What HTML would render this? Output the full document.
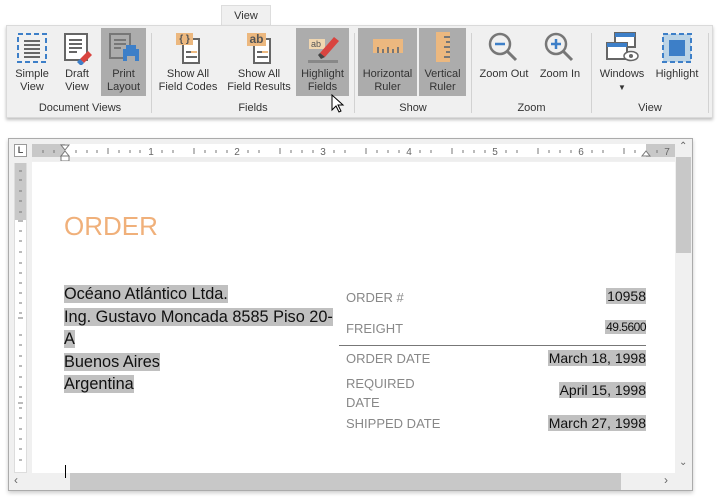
<!DOCTYPE html>
<html><head><meta charset="utf-8"><style>
*{margin:0;padding:0;box-sizing:border-box}
body{width:719px;height:501px;background:#fff;font-family:"Liberation Sans",sans-serif;position:relative;overflow:hidden;color:#333}
.abs{position:absolute}
.tab{left:221px;top:5px;width:50px;height:22px;background:#f0f0f0;border:1px solid #ddd;border-bottom:none;font-size:11px;text-align:center;line-height:20px;color:#333}
.rib{left:6px;top:25px;width:707px;height:93px;background:#f0f0f0;border:1px solid #dadada;box-shadow:0 2px 3px rgba(0,0,0,.25)}
.btn{position:absolute;top:28px;height:68px;font-size:11px;color:#333;text-align:center;line-height:13px}
.btn .lb{position:absolute;left:0;right:0;top:40px}
.btn svg{position:absolute;top:3px;left:50%;margin-left:-17px}
.hl{background:#acacac}
.sep{position:absolute;top:33px;width:1px;height:80px;background:#d2d2d2}
.gl{position:absolute;top:102px;font-size:11px;color:#333;text-align:center}
.frame{left:8px;top:138px;width:685px;height:353px;border:1px solid #ababab;background:#f0f0f0;box-shadow:0 2px 4px rgba(0,0,0,.2)}
.page{left:32px;top:162px;width:643px;height:311px;background:#fff}
.f{font-size:16.3px;color:#111;line-height:22.5px}
.f span{background:#c0c0c0}
.lab{font-size:13px;color:#888}
.val{font-size:14px;color:#111;background:#c0c0c0;right:73px;padding-left:1px}
</style></head><body>
<div class="abs tab">View</div>
<div class="abs rib"></div>

<div class="btn" style="left:14px;width:36px">
<svg width="34" height="34" viewBox="0 0 34 34"><rect x="3" y="3" width="28" height="28" fill="none" stroke="#3d7fc8" stroke-width="2" stroke-dasharray="5 3"/><g stroke="#666" stroke-width="2"><line x1="9" y1="10" x2="25" y2="10"/><line x1="9" y1="14" x2="25" y2="14"/><line x1="9" y1="18" x2="25" y2="18"/><line x1="9" y1="22" x2="25" y2="22"/><line x1="9" y1="26" x2="25" y2="26"/></g></svg>
<div class="lb">Simple<br>View</div></div>
<div class="btn" style="left:56px;width:42px">
<svg width="34" height="34" viewBox="0 0 34 34"><rect x="5" y="3" width="22" height="26" fill="#fff" stroke="#666" stroke-width="2"/><g stroke="#666" stroke-width="2"><line x1="9" y1="9" x2="22" y2="9"/><line x1="9" y1="13" x2="22" y2="13"/><line x1="9" y1="17" x2="22" y2="17"/><line x1="9" y1="21" x2="17" y2="21"/></g><path d="M20 28 L28 20 L32 24 L24 32Z" fill="#d9443f"/><path d="M17 31 L20 28 L24 32 L21 35Z" fill="#3d7fc8"/></svg>
<div class="lb">Draft<br>View</div></div>
<div class="btn hl" style="left:101px;width:45px">
<svg width="34" height="34" viewBox="0 0 34 34"><rect x="3" y="3" width="20" height="24" fill="none" stroke="#777" stroke-width="2"/><g stroke="#777" stroke-width="2"><line x1="7" y1="9" x2="19" y2="9"/><line x1="7" y1="13" x2="19" y2="13"/><line x1="7" y1="17" x2="14" y2="17"/></g><rect x="16" y="18" width="16" height="12" fill="#3d7fc8"/><rect x="19" y="14" width="10" height="6" fill="#3d7fc8"/><rect x="20" y="25" width="8" height="6" fill="#acacac"/></svg>
<div class="lb">Print<br>Layout</div></div>
<div class="sep" style="left:151px"></div>
<div class="btn" style="left:158px;width:60px">
<svg width="34" height="34" viewBox="0 0 34 34"><rect x="12" y="8" width="16" height="24" fill="#fff" stroke="#666" stroke-width="2"/><rect x="5" y="2" width="17" height="12" fill="#ecb87f"/><text x="13.5" y="11" font-size="10" text-anchor="middle" fill="#555" font-family="Liberation Sans" font-weight="bold">{ }</text><line x1="15" y1="21" x2="20" y2="21" stroke="#666" stroke-width="2"/><line x1="20" y1="21" x2="26" y2="21" stroke="#ecb87f" stroke-width="2"/><line x1="15" y1="26" x2="26" y2="26" stroke="#666" stroke-width="2"/></svg>
<div class="lb">Show All<br>Field Codes</div></div>
<div class="btn" style="left:227px;width:64px">
<svg width="34" height="34" viewBox="0 0 34 34"><rect x="12" y="8" width="16" height="24" fill="#fff" stroke="#666" stroke-width="2"/><rect x="5" y="2" width="19" height="13" fill="#ecb87f"/><text x="14.5" y="12" font-size="12" text-anchor="middle" fill="#555" font-family="Liberation Sans" font-weight="bold">ab</text><line x1="15" y1="21" x2="20" y2="21" stroke="#666" stroke-width="2"/><line x1="20" y1="21" x2="26" y2="21" stroke="#ecb87f" stroke-width="2"/><line x1="15" y1="26" x2="26" y2="26" stroke="#666" stroke-width="2"/></svg>
<div class="lb">Show All<br>Field Results</div></div>
<div class="btn hl" style="left:296px;width:53px">
<svg width="34" height="34" viewBox="0 0 34 34"><rect x="3" y="8" width="16" height="10" fill="#f0d6b0"/><text x="10" y="16" font-size="9" text-anchor="middle" fill="#555" font-family="Liberation Sans">ab</text><path d="M14 22 L28 6 L33 10 L19 26Z" fill="#d9443f"/><path d="M12 24 L14 22 L19 26 L15 28Z" fill="#444"/><rect x="2" y="29" width="30" height="3" fill="#888"/></svg>
<div class="lb">Highlight<br>Fields</div></div>
<svg class="abs" style="left:331px;top:94px" width="14" height="20" viewBox="0 0 14 20"><path d="M1 1 L1 16 L5 12 L8 18 L10 17 L7 11 L12 11Z" fill="#fff" stroke="#000" stroke-width="1"/></svg>
<div class="sep" style="left:354px"></div>
<div class="btn hl" style="left:358px;width:59px">
<svg width="34" height="34" viewBox="0 0 34 34"><rect x="2" y="8" width="30" height="14" fill="#ecb87f"/><g stroke="#777" stroke-width="2"><line x1="7" y1="22" x2="7" y2="16"/><line x1="12" y1="22" x2="12" y2="18"/><line x1="17" y1="22" x2="17" y2="16"/><line x1="22" y1="22" x2="22" y2="18"/><line x1="27" y1="22" x2="27" y2="16"/></g></svg>
<div class="lb">Horizontal<br>Ruler</div></div>
<div class="btn hl" style="left:419px;width:47px">
<svg width="34" height="34" viewBox="0 0 34 34"><rect x="10" y="1" width="14" height="30" fill="#ecb87f"/><g stroke="#777" stroke-width="2"><line x1="24" y1="6" x2="18" y2="6"/><line x1="24" y1="11" x2="20" y2="11"/><line x1="24" y1="16" x2="18" y2="16"/><line x1="24" y1="21" x2="20" y2="21"/><line x1="24" y1="26" x2="18" y2="26"/></g></svg>
<div class="lb">Vertical<br>Ruler</div></div>
<div class="sep" style="left:471px"></div>
<div class="btn" style="left:477px;width:54px">
<svg width="34" height="34" viewBox="0 0 34 34"><circle cx="13" cy="13" r="10" fill="none" stroke="#777" stroke-width="2.5"/><line x1="20" y1="20" x2="29" y2="29" stroke="#777" stroke-width="3"/><line x1="8" y1="13" x2="18" y2="13" stroke="#3d7fc8" stroke-width="2.5"/></svg>
<div class="lb">Zoom Out</div></div>
<div class="btn" style="left:536px;width:48px">
<svg width="34" height="34" viewBox="0 0 34 34"><circle cx="13" cy="13" r="10" fill="none" stroke="#777" stroke-width="2.5"/><line x1="20" y1="20" x2="29" y2="29" stroke="#777" stroke-width="3"/><line x1="8" y1="13" x2="18" y2="13" stroke="#3d7fc8" stroke-width="2.5"/><line x1="13" y1="8" x2="13" y2="18" stroke="#3d7fc8" stroke-width="2.5"/></svg>
<div class="lb">Zoom In</div></div>
<div class="sep" style="left:591px"></div>
<div class="btn" style="left:597px;width:50px">
<svg width="34" height="34" viewBox="0 0 34 34"><rect x="10" y="2" width="20" height="14" fill="#fff" stroke="#666" stroke-width="2"/><rect x="10" y="2" width="20" height="4" fill="#3d7fc8"/><rect x="2" y="12" width="20" height="16" fill="#fff" stroke="#666" stroke-width="2"/><rect x="2" y="12" width="20" height="4" fill="#3d7fc8"/><ellipse cx="26" cy="25" rx="7" ry="4.5" fill="#fff" stroke="#666" stroke-width="1.5"/><circle cx="26" cy="25" r="2" fill="#666"/></svg>
<div class="lb">Windows<br><span style="font-size:8px">▼</span></div></div>
<div class="btn" style="left:652px;width:50px">
<svg width="34" height="34" viewBox="0 0 34 34"><rect x="3" y="3" width="28" height="28" fill="#bcd4e6" stroke="#3d7fc8" stroke-width="2" stroke-dasharray="5 3"/><rect x="9" y="9" width="16" height="16" fill="#3d7fc8"/></svg>
<div class="lb">Highlight</div></div>
<div class="sep" style="left:708px"></div>

<div class="gl" style="left:14px;width:132px">Document Views</div>
<div class="gl" style="left:152px;width:202px">Fields</div>
<div class="gl" style="left:355px;width:116px">Show</div>
<div class="gl" style="left:472px;width:119px">Zoom</div>
<div class="gl" style="left:592px;width:116px">View</div>

<div class="abs frame"></div>
<div class="abs" style="left:14px;top:144px;width:13px;height:13px;border:1px solid #999;background:#fff;font-size:9px;font-weight:bold;line-height:11px;text-align:center;color:#555">L</div>
<div class="abs" style="left:32px;top:144px;width:643px;height:17px;background:#c8c8c8;border-bottom:1px solid #bbb"></div>
<div class="abs" style="left:65px;top:144px;width:581px;height:13px;background:#fff"></div>
<div class="abs" style="left:32px;top:157px;width:643px;height:4px;background:#eee"></div>
<svg class="abs" style="left:32px;top:144px" width="643" height="17">
<g stroke="#777" stroke-width="1">
<path d="M11 6v3M22 6v3M44 6v3M55 6v3M65 6v3M87 6v3M98 6v3M108 6v3M130 6v3M141 6v3M162 6v3M173 6v3M184 6v3M195 6v3M216 6v3M227 6v3M248 6v3M259 6v3M270 6v3M281 6v3M302 6v3M313 6v3M334 6v3M345 6v3M356 6v3M367 6v3M388 6v3M399 6v3M420 6v3M431 6v3M442 6v3M453 6v3M474 6v3M485 6v3M506 6v3M517 6v3M528 6v3M539 6v3M560 6v3M571 6v3M592 6v3M603 6v3M625 6v3"/>
<path d="M76 4v6M162 4v6M248 4v6M334 4v6M420 4v6M506 4v6M592 4v6"/>
</g>
<g font-size="10" fill="#666" font-family="Liberation Sans" text-anchor="middle"><text x="119" y="11">1</text><text x="205" y="11">2</text><text x="291" y="11">3</text><text x="377" y="11">4</text><text x="463" y="11">5</text><text x="549" y="11">6</text><text x="635" y="11">7</text></g>
<path d="M29 1h8l-4 5z M29 12h8l-4-5z" fill="#fff" stroke="#777"/><rect x="29" y="12" width="8" height="5" fill="#fff" stroke="#777"/>
<path d="M610 12h8l-4-5z" fill="#fff" stroke="#777"/>
</svg>
<div class="abs" style="left:14px;top:163px;width:13px;height:310px;background:#fff;border:1px solid #ddd"></div>
<div class="abs" style="left:15px;top:163px;width:11px;height:57px;background:#c8c8c8"></div>
<svg class="abs" style="left:14px;top:163px" width="13" height="310"><g stroke="#777"><path d="M5 8h3M5 17h3M5 28h3M5 38h3M5 49h3M5 68h3M5 78h3M5 89h3M5 100h3M5 110h3M5 120h3M5 130h3M5 140h3M5 150h3M5 172h3M5 182h3M5 193h3M5 203h3M5 214h3M5 224h3M5 234h3M5 245h3M5 255h3M5 266h3M5 276h3M5 286h3M5 297h3"/><path d="M4 155h5M4 240h5M4 58h5"/></g></svg>

<div class="abs page"></div>
<div class="abs" style="left:676px;top:139px;width:16px;height:334px;background:#f0f0f0"></div>
<div class="abs" style="left:676px;top:157px;width:15px;height:96px;background:#c8c8c8"></div>
<div class="abs" style="left:679px;top:141px;font-size:10px;color:#666">&#8963;</div>
<div class="abs" style="left:679px;top:457px;font-size:10px;color:#666">&#8964;</div>
<div class="abs" style="left:9px;top:473px;width:667px;height:17px;background:#f0f0f0"></div>
<div class="abs" style="left:70px;top:473px;width:551px;height:17px;background:#c8c8c8"></div>
<div class="abs" style="left:14px;top:473px;font-size:12px;color:#666">&lsaquo;</div>
<div class="abs" style="left:664px;top:473px;font-size:12px;color:#666">&rsaquo;</div>

<div class="abs" style="left:64px;top:211px;font-size:26px;color:#f0b07a">ORDER</div>
<div class="abs f" style="left:64px;top:283px;width:285px">
<span>Océano Atlántico Ltda.</span><br><span>Ing. Gustavo Moncada 8585 Piso 20-</span><br><span>A</span><br><span>Buenos Aires</span><br><span>Argentina</span></div>
<div class="abs" style="left:65px;top:465px;width:1px;height:13px;background:#000"></div>

<div class="abs lab" style="left:346px;top:290px">ORDER #</div>
<div class="abs val" style="top:288px">10958</div>
<div class="abs lab" style="left:346px;top:321px">FREIGHT</div>
<div class="abs val" style="top:320px;font-size:12px;letter-spacing:-0.5px">49.5600</div>
<div class="abs" style="left:339px;top:345px;width:307px;height:1px;background:#777"></div>
<div class="abs lab" style="left:346px;top:351px">ORDER DATE</div>
<div class="abs val" style="top:350px">March 18, 1998</div>
<div class="abs lab" style="left:346px;top:374px;line-height:19px">REQUIRED<br>DATE</div>
<div class="abs val" style="top:382px">April 15, 1998</div>
<div class="abs lab" style="left:346px;top:416px">SHIPPED DATE</div>
<div class="abs val" style="top:415px">March 27, 1998</div>
</body></html>
